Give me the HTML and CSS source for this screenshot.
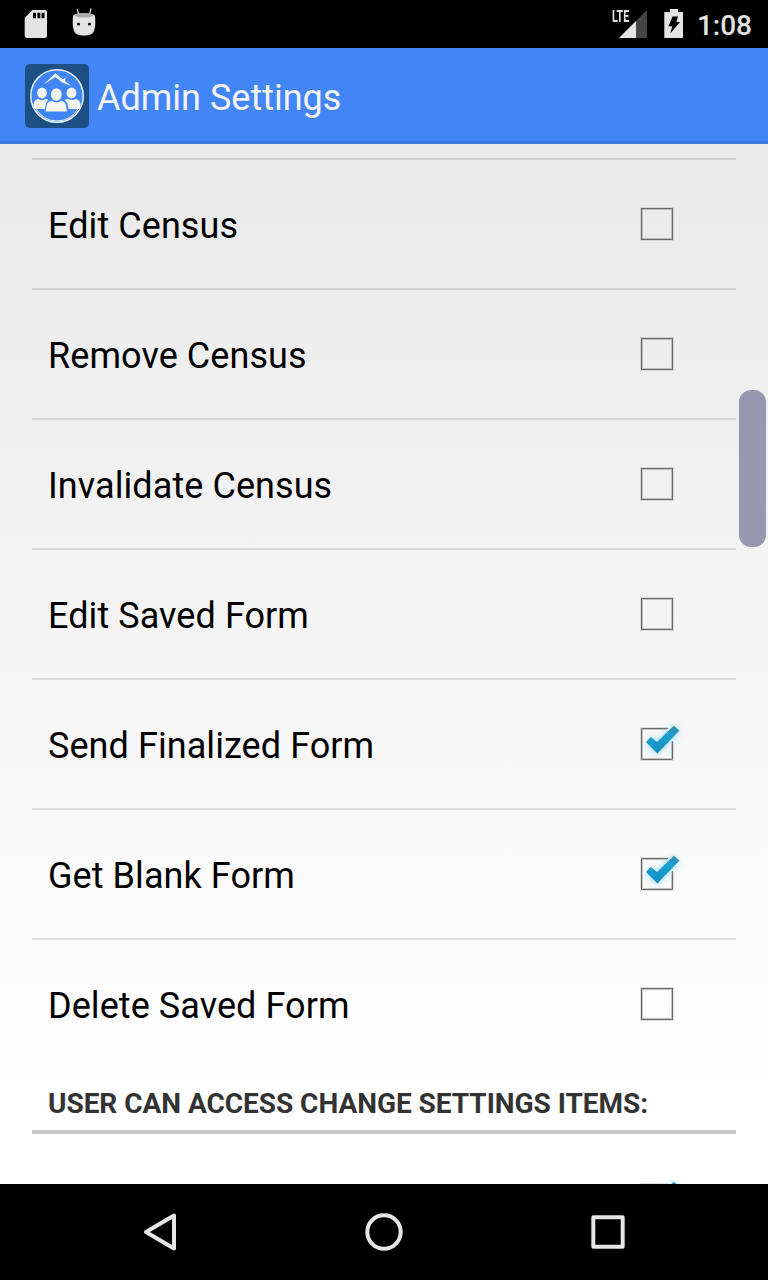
FILE: index.html
```
<!DOCTYPE html>
<html lang="en">
<head>
<meta charset="utf-8">
<title>Admin Settings</title>
<link rel="stylesheet" href="styles.css">
</head>
<body>
<svg class="defs" width="0" height="0" aria-hidden="true">
  <defs>
    <linearGradient id="tick" x1="0" y1="0" x2="0" y2="1"><stop offset="0" stop-color="#3b8aa6"/><stop offset=".35" stop-color="#1b9fd0"/><stop offset="1" stop-color="#148fc0"/></linearGradient>
    <filter id="glow" x="-50%" y="-50%" width="200%" height="200%"><feGaussianBlur stdDeviation="3.500"/></filter>
    <symbol id="box" viewBox="0 0 60 60">
      <rect x="10.500" y="12.500" width="33" height="33" fill="none" stroke="#888" stroke-opacity=".25"/>
      <rect x="11.500" y="13.500" width="31" height="31" fill="none" stroke="#6a6a6a"/>
      <rect x="12.500" y="14.500" width="29" height="29" fill="none" stroke="#aaa" stroke-opacity=".7"/>
    </symbol>
    <symbol id="box-on" viewBox="0 0 60 60">
      <path d="M38 12.500H10.500V45.500H43.500V26" fill="none" stroke="#888" stroke-opacity=".25"/>
      <path d="M38 13.500H11.500V44.500H42.500V26" fill="none" stroke="#6a6a6a"/>
      <path d="M37 14.500H12.500V43.500H41.500V27" fill="none" stroke="#aaa" stroke-opacity=".7"/>
      <path d="M19 26L27 33L46 14" fill="none" stroke="#7bd2f5" stroke-opacity=".7" stroke-width="9" filter="url(#glow)"/>
      <path d="M16 27L20.800 22L27 27L43.800 10.700L49.500 15.500L27.400 38.500Z" fill="url(#tick)"/>
    </symbol>
  </defs>
</svg>
<div class="screen">
  <div class="status">
    <svg width="100" height="48" viewBox="0 0 100 48">
      <path fill="#e4e4e4" fill-rule="evenodd" d="M32.500 10H45Q47 10 47 12V35.500Q47 38 44.500 38H27Q24.700 38 24.700 35.500V18ZM33 12.700V18.300H36V12.700ZM37.300 12.700V18.300H40.300V12.700ZM41.600 12.700V18.300H44.500V12.700Z"/>
      <path d="M78.500 14L77.300 9M89.700 14L91 8.500" stroke="#e4e4e4" stroke-width="1.200"/>
      <path d="M73 16Q74 13.200 84 13.200Q94 13.200 95 16C95.500 21 95.500 27 94 31C92.500 34.500 89 35.500 84 35.500S75.500 34.500 74 31C72.500 27 72.500 21 73 16Z" fill="#e4e4e4"/>
      <ellipse cx="84" cy="15.400" rx="9.400" ry="2.200" fill="#aaa"/>
      <circle cx="78.500" cy="24" r="1.500"/><circle cx="89.500" cy="24" r="1.500"/>
    </svg>
    <div class="status-right">
      <div class="signal">
        <svg width="36" height="48" viewBox="0 0 36 48"><path d="M35 10V38H7Z" fill="#454545"/><path d="M24 21V38H7Z" fill="#e4e4e4"/></svg>
        <span class="lte">LTE</span>
      </div>
      <svg class="battery" width="20" height="48" viewBox="0 0 20 48"><path d="M6 9H14V12H19V38H.300V12H6Z" fill="#e4e4e4"/><path d="M8.500 16.500H14L12.300 22H16L6.300 33.500L8.300 26.300H4.500Z" fill="#000"/></svg>
      <span class="clock">1:08</span>
    </div>
  </div>
  <header class="bar">
    <svg width="64" height="64" viewBox="0 0 64 64">
      <rect width="64" height="64" rx="5" fill="#1c5085"/>
      <circle cx="32" cy="32" r="26.300" fill="#4184f3" stroke="#e5efff" stroke-width="1.500"/>
      <path d="M10.500 44Q18 57 32 57T53.500 44" fill="none" stroke="#e5efff" stroke-width="1"/>
      <path d="M18.500 20.500L30.500 9.300L38 15.500L40.500 13.500L40 17L42 18.500L46.500 22L37 18.500L30.500 13Z" fill="#f3f3f3"/>
      <g fill="#f3f3f3">
        <ellipse cx="17" cy="29" rx="4.900" ry="5.400"/><path d="M8.500 45V40Q9.500 35.500 13 35Q17 37 21 35Q23 35 23.500 36Q20.500 38 20 45Z"/>
        <ellipse cx="46.500" cy="29" rx="4.900" ry="5.400"/><path d="M55.500 45V40Q54.500 35.500 51 35Q47 37 43 35Q41 35 39.500 36Q43 38 43.500 45Z"/>
        <ellipse cx="31.300" cy="30.500" rx="5.400" ry="6.200"/><path d="M20.700 47.500L21.700 41Q22.700 37.500 27 36.800Q31.500 40 36 36.800Q40 37.500 41 41L42 47.500Z"/>
      </g>
    </svg>
    <h1 class="title">Admin Settings</h1>
  </header>
  <main class="content">
    <ul class="list">
      <li class="row"><span>Edit Census</span><svg class="check"><use href="#box"/></svg></li>
      <li class="row"><span>Remove Census</span><svg class="check"><use href="#box"/></svg></li>
      <li class="row"><span>Invalidate Census</span><svg class="check"><use href="#box"/></svg></li>
      <li class="row"><span>Edit Saved Form</span><svg class="check"><use href="#box"/></svg></li>
      <li class="row"><span>Send Finalized Form</span><svg class="check"><use href="#box-on"/></svg></li>
      <li class="row"><span>Get Blank Form</span><svg class="check"><use href="#box-on"/></svg></li>
      <li class="row"><span>Delete Saved Form</span><svg class="check"><use href="#box"/></svg></li>
    </ul>
    <h2 class="section">USER CAN ACCESS CHANGE SETTINGS ITEMS:</h2>
    <div class="row row-first"><span></span><svg class="check"><use href="#box-on"/></svg></div>
    <div class="thumb"></div>
  </main>
  <nav class="nav">
    <svg width="768" height="96" viewBox="0 0 768 96" fill="none" stroke="#e6e6e6" stroke-width="4" stroke-linejoin="round">
      <path d="M174 31.500V64.500L146 48Z"/><circle cx="384" cy="48" r="16.700"/><rect x="593.300" y="33.300" width="29.400" height="29.400"/>
    </svg>
  </nav>
</div>
</body>
</html>
```
FILE: styles.css
```
body { margin: 0; font-family: Roboto, sans-serif; }
.defs { display: block; height: 0; }
.screen { width: 768px; height: 1280px; display: flex; flex-direction: column; overflow: hidden; background: #000; }
.screen svg { display: block; flex: none; }
.status { height: 48px; display: flex; justify-content: space-between; background: #000; color: #e4e4e4; }
.status-right { display: flex; padding-right: 16px; }
.signal { position: relative; }
.lte { position: absolute; left: 0; top: 8px; font-size: 17px; line-height: 17px; font-weight: 700; transform: scaleX(.63); transform-origin: left; }
.battery { margin-left: 16px; }
.clock { margin-left: 13px; font-size: 28px; line-height: 52px; font-weight: 500; }
.bar { box-sizing: border-box; height: 96px; padding: 3px 25px 0; display: flex; align-items: center; gap: 8px; background: #4285f4; border-bottom: 3px solid #3d7be2; }
.title { margin: 0; padding-top: 4px; font-size: 36px; line-height: 42px; font-weight: 400; color: #f3f3f3; }
.content { position: relative; box-sizing: border-box; height: 1040px; padding: 14px 32px 0; overflow: hidden; background: linear-gradient(#eaeaea, #ececec 10%, #fff 92%); }
.list { margin: 0; padding: 0; list-style: none; }
.row { box-sizing: border-box; height: 130px; padding: 0 46px 0 16px; display: flex; align-items: center; justify-content: space-between; border-top: 2px solid rgba(0, 0, 0, .11); font-size: 36px; line-height: 42px; letter-spacing: .07px; color: #000; }
.row > span { padding-top: 3px; }
.row-first { border-top-color: transparent; }
.check { width: 60px; height: 60px; position: relative; top: 1px; }
.section { box-sizing: border-box; height: 66px; margin: 0; padding: 19px 16px 0; border-bottom: 4px solid #c8c8c8; font-size: 28px; line-height: 34px; font-weight: 700; letter-spacing: -.03px; color: #333; white-space: nowrap; }
.thumb { position: absolute; left: 739px; top: 246px; width: 27px; height: 157px; border-radius: 12px; background: #9897b0; }
.nav { height: 96px; background: #000; }
```
